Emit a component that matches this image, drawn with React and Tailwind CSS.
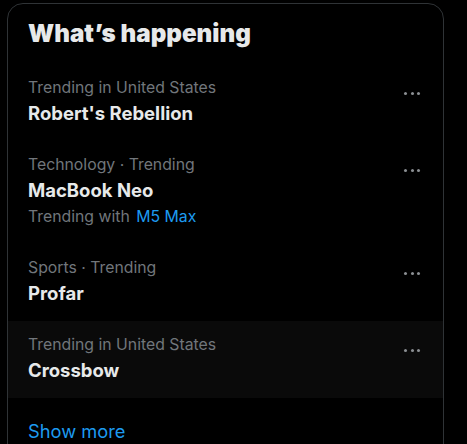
import React from "react";

function Dots() {
  return (
    <div className="flex items-center gap-[3.5px] pt-[5px]">
      <span className="block h-[3px] w-[3px] rounded-full bg-[#8b8f93]" />
      <span className="block h-[3px] w-[3px] rounded-full bg-[#8b8f93]" />
      <span className="block h-[3px] w-[3px] rounded-full bg-[#8b8f93]" />
    </div>
  );
}

function Trend({ category, title, extra, hover }) {
  return (
    <div className={`flex justify-between pl-[20px] pr-[23px] pt-[12px] ${extra ? "h-[103px]" : "h-[77px]"} ${hover ? "bg-[#0a0a0a]" : ""}`}>
      <div className="flex flex-col">
        <div className="text-[15.8px] leading-[24px] text-[#71767b]">{category}</div>
        <div className="text-[18.5px] leading-[26px] font-bold text-[#e7e9ea]">{title}</div>
        {extra && (
          <div className="mt-[1px] text-[15.8px] leading-[26px] text-[#71767b]">
            Trending with <span className="ml-[2px] text-[#1d9bf0]">{extra}</span>
          </div>
        )}
      </div>
      <div className="pt-[11px]">
        <Dots />
      </div>
    </div>
  );
}

export default function App() {
  return (
    <div className="min-h-[444px] w-[467px] overflow-hidden bg-black pl-[7px] pt-[3px]" style={{ fontFamily: "Inter, 'Noto Sans', sans-serif" }}>
      <div className="h-[460px] w-[437px] rounded-[16px] border border-[#2f3336] overflow-hidden">
        <div className="h-[60px] pl-[20px] pt-[14px]">
          <h2 className="text-[24.2px] leading-[32px] font-black text-[#e7e9ea]">What’s happening</h2>
        </div>
        <Trend category="Trending in United States" title="Robert's Rebellion" />
        <Trend category="Technology · Trending" title="MacBook Neo" extra="M5 Max" />
        <Trend category="Sports · Trending" title="Profar" />
        <Trend category="Trending in United States" title="Crossbow" hover />
        <div className="pl-[20px] pt-[20px] text-[18.3px] leading-[26px] text-[#1d9bf0]">Show more</div>
      </div>
    </div>
  );
}
